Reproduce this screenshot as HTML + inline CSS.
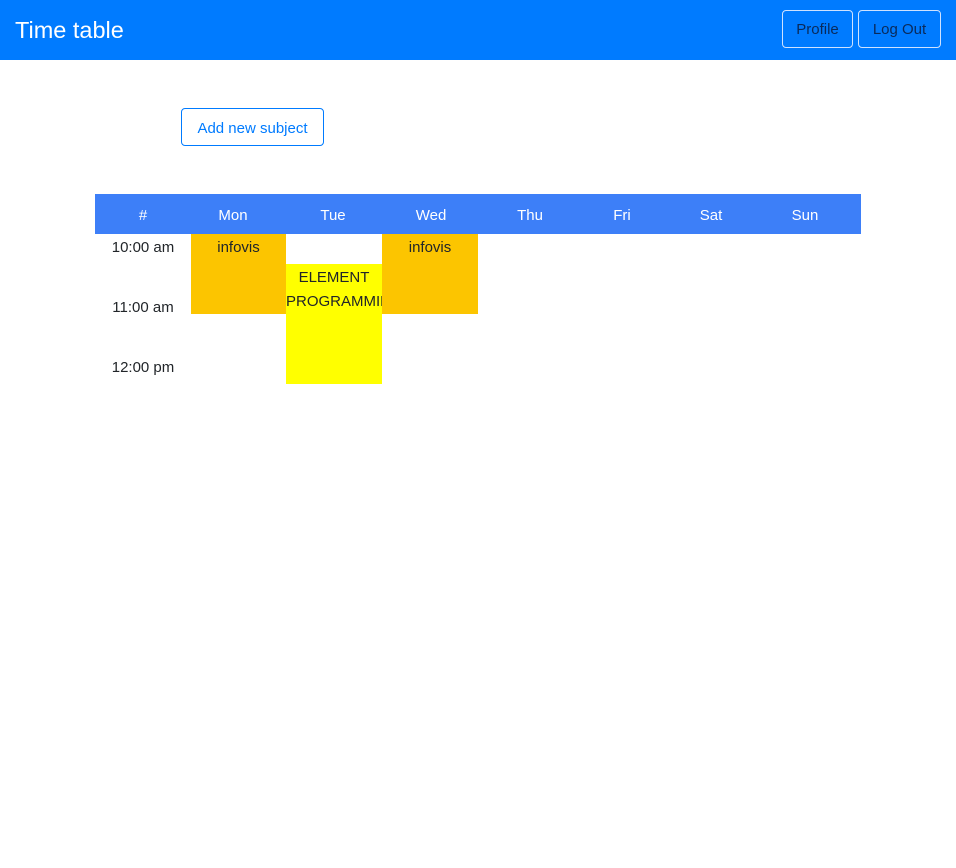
<!DOCTYPE html>
<html><head><meta charset="utf-8"><style>
body{margin:0;width:956px;height:868px;background:#fff;font-family:"Liberation Sans",sans-serif;position:relative;overflow:hidden;color:#212529}
.nav{position:absolute;left:0;top:0;width:956px;height:60px;background:#007bff}
.title{position:absolute;left:15px;top:17px;color:#fff;font-size:23.5px}
.btn{position:absolute;top:10px;height:38px;border:1px solid #cfe2ff;border-radius:4px;color:#0a2a5a;font-size:15px;line-height:38px;text-align:center;box-sizing:border-box}
.add{position:absolute;left:181px;top:108px;width:143px;height:38px;border:1px solid #007bff;border-radius:4px;color:#007bff;font-size:15px;line-height:39px;text-align:center;box-sizing:border-box}
.th{position:absolute;left:95px;top:194px;width:766px;height:40px;background:#3d7ff8}
.h{position:absolute;top:2px;line-height:40px;color:#fff;font-size:15px;transform:translateX(-50%)}
.t{position:absolute;font-size:15px;transform:translateX(-50%);line-height:24px}
.blk{position:absolute;text-align:center;font-size:15px;line-height:24px;overflow:hidden;white-space:nowrap;box-sizing:border-box;padding-top:2px}
</style></head><body>
<div class="nav"><div class="title">Time table</div>
<div class="btn" style="left:782px;width:71px">Profile</div>
<div class="btn" style="left:858px;width:83px">Log Out</div></div>
<div class="add">Add new subject</div>
<div class="th">
<div class="h" style="left:48px">#</div>
<div class="h" style="left:138px">Mon</div>
<div class="h" style="left:238px">Tue</div>
<div class="h" style="left:336px">Wed</div>
<div class="h" style="left:435px">Thu</div>
<div class="h" style="left:527px">Fri</div>
<div class="h" style="left:616px">Sat</div>
<div class="h" style="left:710px">Sun</div>
</div>
<div class="t" style="left:143px;top:236px">10:00 am</div>
<div class="t" style="left:143px;top:296px">11:00 am</div>
<div class="t" style="left:143px;top:356px">12:00 pm</div>
<div class="blk" style="left:191px;top:234px;width:95px;height:80px;background:#fcc500">infovis</div>
<div class="blk" style="left:382px;top:234px;width:96px;height:80px;background:#fcc500">infovis</div>
<div class="blk" style="left:286px;top:264px;width:96px;height:120px;background:#ffff00">ELEMENT<br>PROGRAMMING</div>
</body></html>
